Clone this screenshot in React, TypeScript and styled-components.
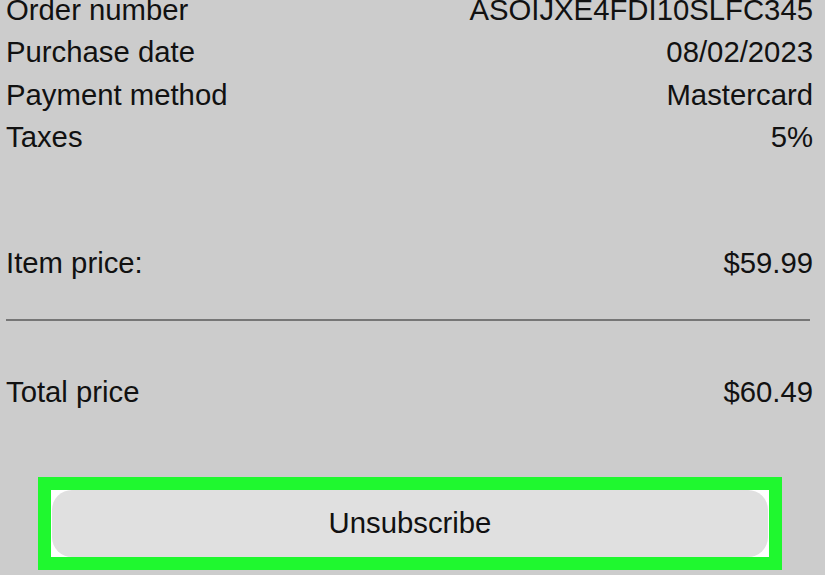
import React from "react";
import styled, { createGlobalStyle } from "styled-components";

const GlobalStyle = createGlobalStyle`
  html, body {
    margin: 0;
    padding: 0;
    background: #cccccc;
    overflow: hidden;
  }
  body {
    font-family: "Liberation Sans", Arial, sans-serif;
    color: #111111;
  }
`;

const Page = styled.div`
  width: 825px;
  height: 575px;
  box-sizing: border-box;
  padding: 0 12px 0 6px;
  background: #cccccc;
  overflow: hidden;
`;

const Details = styled.div`
  margin-top: -11px;
  display: flex;
  flex-direction: column;
`;

const Row = styled.div<{ $gap?: number }>`
  display: flex;
  justify-content: space-between;
  align-items: baseline;
  font-size: 29.3px;
  line-height: 42.3px;
  margin-top: ${(p) => p.$gap ?? 0}px;
`;

const Label = styled.span``;
const Value = styled.span`
  text-align: right;
`;

const Divider = styled.hr`
  border: none;
  height: 2px;
  background: #767676;
  margin: 35px 3px 0 0;
`;

const Highlight = styled.div`
  width: 744px;
  box-sizing: border-box;
  margin: 63px 0 0 32px;
  border: 13px solid #1ff82f;
  background: #ffffff;
  display: flex;
`;

const Button = styled.button`
  flex: 1;
  height: 67px;
  margin: 0 1px;
  border: none;
  border-radius: 20px;
  background: #e0e0e0;
  font-family: "Liberation Sans", Arial, sans-serif;
  font-size: 29.3px;
  color: #111111;
  padding: 0;
  cursor: pointer;
`;

const rows: [string, string][] = [
  ["Order number", "ASOIJXE4FDI10SLFC345"],
  ["Purchase date", "08/02/2023"],
  ["Payment method", "Mastercard"],
  ["Taxes", "5%"],
];

export default function App() {
  return (
    <>
      <GlobalStyle />
      <Page>
        <Details>
          {rows.map(([l, v]) => (
            <Row key={l}>
              <Label>{l}</Label>
              <Value>{v}</Value>
            </Row>
          ))}
          <Row $gap={84}>
            <Label>Item price:</Label>
            <Value>$59.99</Value>
          </Row>
          <Divider />
          <Row $gap={50}>
            <Label>Total price</Label>
            <Value>$60.49</Value>
          </Row>
        </Details>
        <Highlight>
          <Button>Unsubscribe</Button>
        </Highlight>
      </Page>
    </>
  );
}
